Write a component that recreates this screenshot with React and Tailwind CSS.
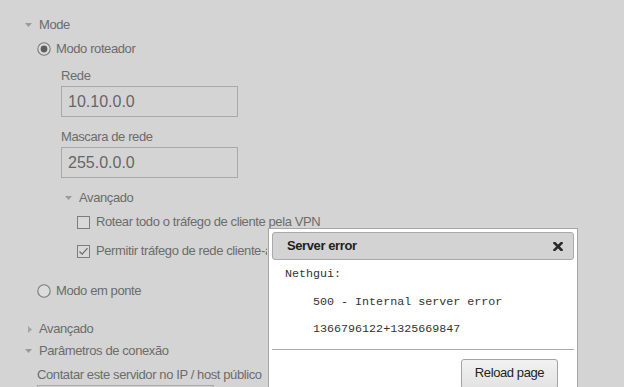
import React from "react";

const DownTri = ({ className = "" }) => (
  <svg width="7" height="4" viewBox="0 0 7 4" className={className}>
    <polygon points="0,0 7,0 3.5,4" fill="#9a9a9a" />
  </svg>
);
const RightTri = ({ className = "" }) => (
  <svg width="4" height="7" viewBox="0 0 4 7" className={className}>
    <polygon points="0,0 4,3.5 0,7" fill="#a5a5a5" />
  </svg>
);

const Radio = ({ checked }) => (
  <svg width="14" height="14" viewBox="0 0 14 14" className="shrink-0">
    <circle cx="7" cy="7" r="6.2" fill="#dcdcdc" stroke="#7a7a7a" strokeWidth="1.1" />
    {checked && <circle cx="7" cy="7" r="3.4" fill="#5e5e5e" />}
  </svg>
);

const Check = ({ checked }) => (
  <svg width="13" height="13" viewBox="0 0 13 13" className="shrink-0">
    <rect x="0.5" y="0.5" width="12" height="12" fill="#d8d8d8" stroke="#7d7d7d" />
    {checked && (
      <polyline points="2.5,6.5 5.2,9.2 10.5,3.2" fill="none" stroke="#6a6a6a" strokeWidth="1.2" />
    )}
  </svg>
);

const Row = ({ className = "", children }) => (
  <div className={"flex items-center h-4 leading-4 whitespace-nowrap " + className}>{children}</div>
);

export default function App() {
  return (
    <div
      className="relative w-[624px] h-[387px] overflow-hidden bg-[#d4d4d4] text-[#6c6c6c] text-[13px] tracking-[-0.4px]"
      style={{ fontFamily: '"Liberation Sans", Arial, sans-serif' }}
    >
      <div className="flex flex-col pt-[17px]">
        <Row className="pl-[25px]">
          <DownTri />
          <span className="ml-[7px]">Mode</span>
        </Row>
        <Row className="mt-[8px] pl-[37px]">
          <Radio checked />
          <span className="ml-[5px]">Modo roteador</span>
        </Row>
        <Row className="mt-[11px] pl-[61px]">Rede</Row>
        <div className="mt-[2px] ml-[61px] w-[177px] h-[31px] border border-[#a9a9a9] flex items-center pl-[6px] text-[16px] tracking-normal text-[#666]">
          10.10.0.0
        </div>
        <Row className="mt-[12px] pl-[61px]">Mascara de rede</Row>
        <div className="mt-[2px] ml-[61px] w-[177px] h-[31px] border border-[#a9a9a9] flex items-center pl-[6px] text-[16px] tracking-normal text-[#666]">
          255.0.0.0
        </div>
        <Row className="mt-[12px] pl-[65px]">
          <DownTri />
          <span className="ml-[7px]">Avançado</span>
        </Row>
        <Row className="mt-[8px] pl-[77px]">
          <Check />
          <span className="ml-[6px]">Rotear todo o tráfego de cliente pela VPN</span>
        </Row>
        <Row className="mt-[13px] pl-[77px]">
          <Check checked />
          <span className="ml-[6px] w-[171px] overflow-hidden">Permitir tráfego de rede cliente-a-cliente</span>
        </Row>
        <Row className="mt-[24px] pl-[37px]">
          <Radio />
          <span className="ml-[5px]">Modo em ponte</span>
        </Row>
        <Row className="mt-[22px] pl-[28px]">
          <RightTri />
          <span className="ml-[7px]">Avançado</span>
        </Row>
        <Row className="mt-[6px] pl-[25px]">
          <DownTri />
          <span className="ml-[7px]">Parâmetros de conexão</span>
        </Row>
        <Row className="mt-[8px] pl-[37px]">Contatar este servidor no IP / host público</Row>
        <div className="mt-[2px] ml-[37px] w-[177px] h-[31px] border border-[#a9a9a9]" />
      </div>

      {/* Dialog */}
      <div className="absolute left-[268px] top-[228px] w-[310px] h-[180px] bg-white border border-[#a6a6a6] p-[3px] flex flex-col">
        <div className="h-[28px] shrink-0 border border-[#aaaaaa] rounded-[3px] bg-[#d3d3d3] flex items-center justify-between pl-[14px] pr-[10px]">
          <span className="font-bold text-[#222] leading-[26px]">Server error</span>
          <svg width="10" height="9" viewBox="0 0 10 9">
            <path d="M1.5 1 L8.5 8 M8.5 1 L1.5 8" stroke="#2a2a2a" strokeWidth="2.6" strokeLinecap="square" />
          </svg>
        </div>
        <div
          className="text-[11.7px] tracking-normal text-[#333] leading-4 pl-[13px] whitespace-pre"
          style={{ fontFamily: '"Liberation Mono", "Courier New", monospace' }}
        >
          <div className="mt-[6px]">Nethgui:</div>
          <div className="mt-[12px] pl-[28px]">500 - Internal server error</div>
          <div className="mt-[11px] pl-[28px]">1366796122+1325669847</div>
        </div>
        <div className="mt-[12px] h-px bg-[#ababab] shrink-0" />
        <div className="flex justify-end pr-[16px] mt-[9px]">
          <div className="w-[97px] h-[30px] border border-[#a3a3a3] rounded-[3px] bg-gradient-to-b from-[#f2f2f2] to-[#e2e2e2] flex items-start justify-center pt-[5px] text-[#222] leading-4">
            Reload page
          </div>
        </div>
      </div>
    </div>
  );
}
